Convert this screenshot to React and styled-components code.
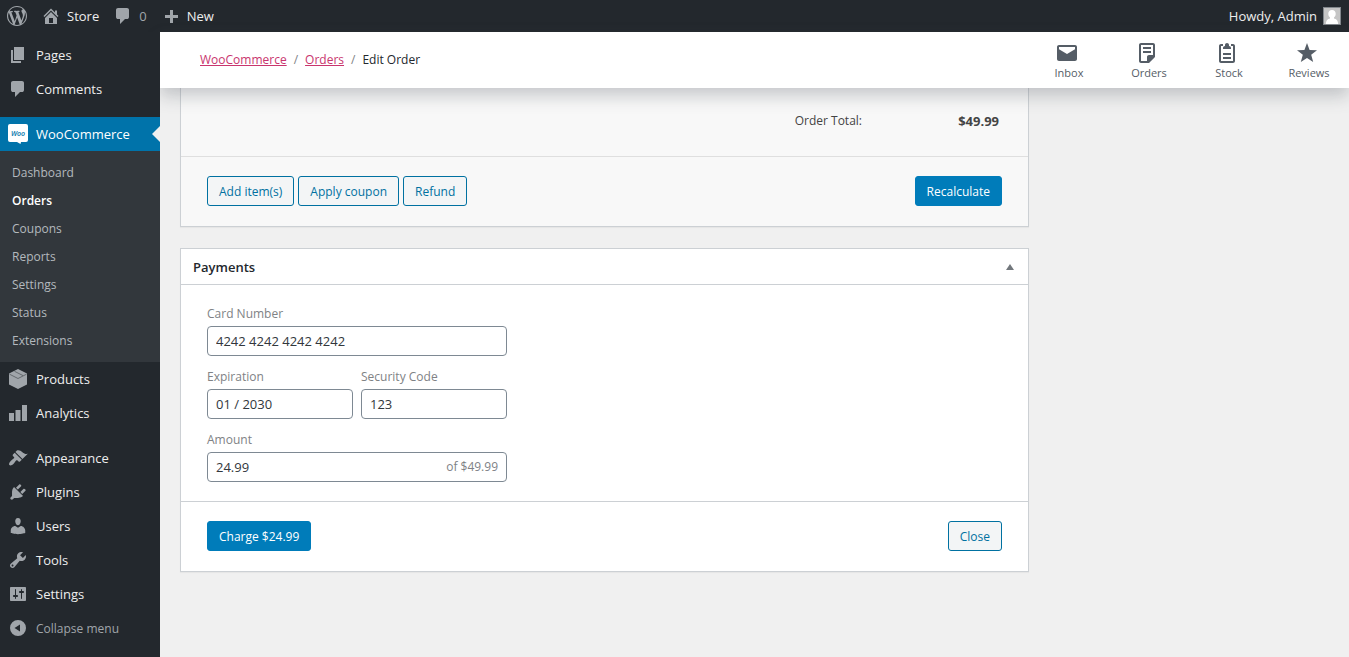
import styled, { createGlobalStyle, ThemeProvider } from 'styled-components';

const theme = {
  colors: {
    base: '#23282d',
    submenu: '#32373c',
    highlight: '#0073aa',
    primary: '#007cba',
    link: '#c9356e',
    border: '#ccd0d4',
    page: '#f0f0f0',
    icon: '#a0a5aa',
    text: '#444',
    muted: '#808285',
  },
  font: '"Segoe UI", "Open Sans", "Noto Sans", sans-serif',
};

const GlobalStyle = createGlobalStyle`
  *, *::before, *::after {
    box-sizing: border-box;
  }

  body {
    margin: 0;
    background: ${({ theme }) => theme.colors.page};
    color: ${({ theme }) => theme.colors.text};
    font-family: ${({ theme }) => theme.font};
    font-size: 12px;
    line-height: 18px;
  }

  button, input {
    font-family: inherit;
  }
`;

const Page = styled.div`
  min-height: 100vh;
  display: flex;
  flex-direction: column;
`;

const AdminBar = styled.header`
  display: flex;
  justify-content: space-between;
  height: 32px;
  padding: 0 8px 0 7px;
  background: ${({ theme }) => theme.colors.base};
`;

const BarGroup = styled.nav`
  display: flex;
  align-items: center;
  gap: 14px;
`;

const BarLink = styled.a`
  display: flex;
  align-items: center;
  gap: 6px;
  color: ${({ $dim }) => ($dim ? '#a0a5aa' : '#eee')};
  font-size: 13px;
  text-decoration: none;
`;

const Icon = styled.svg`
  flex: none;
  width: ${({ $size = 20 }) => $size}px;
  height: ${({ $size = 20 }) => $size}px;
  fill: ${({ theme, $color }) => $color || theme.colors.icon};
`;

const Body = styled.div`
  flex: 1;
  display: flex;
`;

const Sidebar = styled.nav`
  position: relative;
  z-index: 2;
  flex: none;
  width: 160px;
  padding: 6px 0 12px;
  background: ${({ theme }) => theme.colors.base};
`;

const MenuList = styled.ul`
  list-style: none;
  margin: 0 0 11px;
  padding: 0;

  &:last-child {
    margin-bottom: 0;
  }
`;

const MenuLink = styled.a`
  position: relative;
  display: flex;
  align-items: center;
  gap: 8px;
  width: 100%;
  height: 34px;
  padding: 0 8px;
  border: 0;
  background: ${({ theme, $current }) => ($current ? theme.colors.highlight : 'none')};
  color: ${({ $current, $dim }) => ($current ? '#fff' : $dim ? '#a0a5aa' : '#eee')};
  font-size: ${({ $dim }) => ($dim ? 12 : 13)}px;
  text-decoration: none;

  &::after {
    content: '';
    display: ${({ $current }) => ($current ? 'block' : 'none')};
    position: absolute;
    right: 0;
    top: 9px;
    border: 8px solid transparent;
    border-left: 0;
    border-right-color: ${({ theme }) => theme.colors.page};
  }
`;

const Submenu = styled.ul`
  list-style: none;
  margin: 0;
  padding: 8px 0 7px;
  background: ${({ theme }) => theme.colors.submenu};
`;

const SubmenuLink = styled.a`
  display: block;
  padding: 5px 12px;
  color: ${({ $current }) => ($current ? '#fff' : '#b4b9be')};
  font-weight: ${({ $current }) => ($current ? 600 : 400)};
  text-decoration: none;
`;

const Content = styled.div`
  flex: 1;
  min-width: 0;
`;

const PageHeader = styled.div`
  position: relative;
  z-index: 1;
  display: flex;
  justify-content: space-between;
  height: 56px;
  padding-left: 40px;
  background: #fff;
  box-shadow: 0 8px 16px 0 rgba(85, 93, 102, 0.3);
`;

const Breadcrumbs = styled.nav`
  display: flex;
  align-items: center;
  gap: 7px;
  color: #23282d;

  a {
    color: ${({ theme }) => theme.colors.link};
  }
`;

const Separator = styled.span`
  color: ${({ theme }) => theme.colors.muted};
`;

const Activity = styled.div`
  display: flex;
`;

const ActivityTab = styled.button`
  display: flex;
  flex-direction: column;
  align-items: center;
  width: 80px;
  padding: 9px 0 0;
  border: 0;
  background: none;
  color: #555d66;
  font-size: 11px;
  line-height: 16px;

  svg {
    margin-right: 4px;
  }
`;

const Main = styled.main`
  display: grid;
  gap: 21px;
  padding: 0 320px 20px 20px;
`;

const Card = styled.section`
  border: 1px solid ${({ theme }) => theme.colors.border};
  border-top-width: ${({ $cut }) => ($cut ? 0 : '1px')};
  background: ${({ $cut }) => ($cut ? '#f8f8f8' : '#fff')};
  box-shadow: 0 1px 1px rgba(0, 0, 0, 0.04);
`;

const Totals = styled.dl`
  display: flex;
  justify-content: flex-end;
  margin: 0;
  padding: 24px 29px 26px;

  dd {
    width: 137px;
    margin: 0;
    text-align: right;
    font-size: 13px;
    font-weight: 700;
  }
`;

const CardHeader = styled.div`
  display: flex;
  align-items: center;
  justify-content: space-between;
  height: 36px;
  padding: 0 12px;
  border-bottom: 1px solid ${({ theme }) => theme.colors.border};
`;

const CardTitle = styled.h2`
  margin: 0;
  color: #23282d;
  font-size: 13px;
  font-weight: 600;
`;

const Toggle = styled.button`
  display: flex;
  padding: 0;
  border: 0;
  background: none;
`;

const Actions = styled.div`
  display: flex;
  justify-content: space-between;
  padding: 19px 26px 20px;
  border-top: 1px solid ${({ $light }) => ($light ? '#dfdfdf' : '#ccd0d4')};
`;

const ButtonGroup = styled.div`
  display: flex;
  gap: 4px;
`;

const Button = styled.button`
  height: 30px;
  padding: 0 11px;
  border: 1px solid ${({ theme, $primary }) => ($primary ? theme.colors.primary : '#0071a1')};
  border-radius: 3px;
  background: ${({ theme, $primary }) => ($primary ? theme.colors.primary : '#f3f5f6')};
  color: ${({ $primary }) => ($primary ? '#fff' : '#0071a1')};
  font-size: 12px;
  font-weight: ${({ $primary }) => ($primary ? 500 : 400)};
  cursor: pointer;
`;

const Form = styled.form`
  display: grid;
  grid-template-columns: repeat(2, minmax(0, 1fr));
  gap: 12px 8px;
  width: 352px;
  max-width: 100%;
  padding: 20px 26px 19px;
`;

const Field = styled.label`
  display: flex;
  flex-direction: column;
  gap: 3px;
  grid-column: ${({ $wide }) => ($wide ? '1 / -1' : 'auto')};
  color: ${({ theme }) => theme.colors.muted};
`;

const InputBox = styled.span`
  display: flex;
  align-items: center;
  height: 30px;
  padding: 0 8px;
  border: 1px solid #7e8993;
  border-radius: 4px;
  background: #fff;
`;

const Input = styled.input`
  flex: 1;
  min-width: 0;
  padding: 0;
  border: 0;
  outline: 0;
  background: none;
  color: #32373c;
  font-size: 13px;
`;

const WORDPRESS =
  'M20 10c0-5.51-4.49-10-10-10C4.48 0 0 4.49 0 10c0 5.52 4.48 10 10 10 5.51 0 10-4.48 10-10zM7.78 15.37L4.37 6.22c.55-.02 1.17-.08 1.17-.08.5-.06.44-1.13-.06-1.11 0 0-1.45.11-2.37.11-.18 0-.37 0-.58-.01C4.12 2.69 6.87 1.11 10 1.11c2.33 0 4.45.87 6.05 2.34-.68-.11-1.65.39-1.65 1.58 0 .74.45 1.36.9 2.1.35.61.55 1.36.55 2.46 0 1.49-1.4 5-1.4 5l-3.03-8.37c.54-.02.82-.17.82-.17.5-.05.44-1.25-.06-1.22 0 0-1.44.12-2.38.12-.87 0-2.33-.12-2.33-.12-.5-.03-.56 1.2-.06 1.22l.92.08 1.26 3.41zM17.41 10c.24-.64.74-1.87.43-4.25.7 1.29 1.05 2.71 1.05 4.25 0 3.29-1.73 6.24-4.4 7.78.97-2.59 1.94-5.2 2.92-7.78zM6.1 18.09C3.12 16.65 1.11 13.53 1.11 10c0-1.3.23-2.48.72-3.59C3.25 10.3 4.67 14.2 6.1 18.09zm4.03-6.63l2.58 6.98c-.86.29-1.76.45-2.71.45-.79 0-1.57-.11-2.29-.33.81-2.38 1.62-4.74 2.42-7.1z';
const HOME =
  'M16 8.5l1.53 1.53-1.06 1.06L10 4.6l-6.47 6.49-1.06-1.06L10 2.5l4 4v-2h2v4zm-6-2.46l6 5.99V18H4v-5.97zM12 17v-5H8v5h4z';
const COMMENT =
  'M5 2h9q.82 0 1.41.59T16 4v7q0 .82-.59 1.41T14 13h-2l-5 5v-5H5q-.82 0-1.41-.59T3 11V4q0-.82.59-1.41T5 2z';
const PLUS = 'M17 9v3h-5v5H9v-5H4V9h5V4h3v5h5z';
const PAGES = 'M6 15V2h10v13H6zm-1 1h8v2H3V5h2v11z';
const CHART = 'M19 18V2h-5v16h5zm-6.500 0V7h-5v11h5zM6 18v-8H1v8h5z';
const APPEARANCE =
  'M14.48 11.06L7.41 3.99l1.5-1.5c.5-.56 2.3-.47 3.51.32 1.21.8 1.43 1.28 2.91 2.1 1.18.64 2.45 1.26 4.45.85zm-.71.71L6.7 4.7 4.93 6.47c-.39.39-.39 1.02 0 1.41l1.06 1.06c.39.39.39 1.03 0 1.42-.6.6-1.43 1.11-2.21 1.69-.35.26-.7.53-1.01.84C1.43 14.23.4 16.08 1.4 17.07c.99 1 2.84-.03 4.18-1.36.31-.31.58-.66.85-1.02.57-.78 1.08-1.61 1.69-2.21.39-.39 1.02-.39 1.41 0l1.06 1.06c.39.39 1.02.39 1.41 0z';
const PLUGINS =
  'M13.11 4.36L9.87 7.6 8 5.73l3.24-3.24c.35-.34 1.05-.2 1.56.32.52.51.66 1.21.31 1.55zm-8 1.77l.91-1.12 9.01 9.01-1.19.84c-.71.71-2.63 1.16-3.82 1.16H6.14L4.9 17.26c-.59.59-1.54.59-2.12 0-.59-.58-.59-1.53 0-2.12l1.24-1.24v-3.88c0-1.13.4-3.19 1.09-3.89zm7.26 3.97l3.24-3.24c.34-.35 1.04-.21 1.55.31.52.51.66 1.21.31 1.55l-3.24 3.25z';
const USERS =
  'M10 9.25c-2.27 0-2.73-3.44-2.73-3.44C7 4.02 7.82 2 9.97 2c2.16 0 2.98 2.02 2.71 3.81 0 0-.41 3.44-2.68 3.44zm0 2.57L12.72 10c2.39 0 4.52 2.33 4.52 4.53v2.49s-3.65 1.13-7.24 1.13c-3.65 0-7.24-1.13-7.24-1.13v-2.49c0-2.25 1.94-4.48 4.47-4.48z';
const TOOLS =
  'M16.68 9.77c-1.34 1.34-3.3 1.67-4.95.99l-5.41 6.52c-.99.99-2.59.99-3.58 0s-.99-2.59 0-3.57l6.52-5.42c-.68-1.65-.35-3.61.99-4.95 1.28-1.28 3.12-1.62 4.72-1.06l-2.89 2.89 2.82 2.82 2.86-2.87c.53 1.58.18 3.39-1.08 4.65zM3.81 16.21c.4.39 1.04.39 1.43 0 .4-.4.4-1.04 0-1.43-.39-.4-1.03-.4-1.43 0-.39.39-.39 1.03 0 1.43z';
const SETTINGS =
  'M18 16V4c0-.55-.45-1-1-1H3c-.55 0-1 .45-1 1v12c0 .55.45 1 1 1h14c.55 0 1-.45 1-1zM8 11h1c.55 0 1 .45 1 1s-.45 1-1 1H8v1.5c0 .28-.22.5-.5.5s-.5-.22-.5-.5V13H6c-.55 0-1-.45-1-1s.45-1 1-1h1V5.5c0-.28.22-.5.5-.5s.5.22.5.5V11zm5-2h-1c-.55 0-1-.45-1-1s.45-1 1-1h1V5.5c0-.28.22-.5.5-.5s.5.22.5.5V7h1c.55 0 1 .45 1 1s-.45 1-1 1h-1v5.5c0 .28-.22.5-.5.5s-.5-.22-.5-.5V9z';
const COLLAPSE = 'M10 2a8 8 0 1 0 0 16 8 8 0 0 0 0-16zm2 4.5v7L6.5 10z';

const activity = [
  {
    label: 'Inbox',
    path: 'M20 4H4c-1.1 0-2 .9-2 2v12c0 1.1.9 2 2 2h16c1.1 0 2-.9 2-2V6c0-1.1-.9-2-2-2zm0 4.236l-8 4.882-8-4.882V6h16v2.236z',
  },
  {
    label: 'Orders',
    path: 'M16 8H8V6h8v2zm0 2H8v2h8v-2zm4-6v12l-6 6H6c-1.1 0-2-.9-2-2V4c0-1.1.9-2 2-2h12c1.1 0 2 .9 2 2zm-2 10V4H6v16h6v-4c0-1.1.9-2 2-2h4z',
  },
  {
    label: 'Stock',
    path: 'M16 18H8v-2h8v2zm0-6H8v2h8v-2zm2-9h-2v2h2v15H6V5h2V3H6c-1.105 0-2 .895-2 2v15c0 1.105.895 2 2 2h12c1.105 0 2-.895 2-2V5c0-1.105-.895-2-2-2zm-4 2V4c0-1.105-.895-2-2-2s-2 .895-2 2v1c-1.105 0-2 .895-2 2v1h8V7c0-1.105-.895-2-2-2z',
  },
  {
    label: 'Reviews',
    path: 'M12 2l2.582 6.953L22 9.257l-5.822 4.602L18.18 21 12 16.89 5.82 21l2.002-7.14L2 9.256l7.418-.304',
  },
];

const submenu = ['Dashboard', 'Orders', 'Coupons', 'Reports', 'Settings', 'Status', 'Extensions'];

const Dashicon = ({ path }) => (
  <Icon viewBox="0 0 20 20" aria-hidden="true">
    <path fillRule="evenodd" d={path} />
  </Icon>
);

const WooIcon = () => (
  <Icon viewBox="0 0 20 20" $color="#fff" aria-hidden="true">
    <path d="M2 0h16a2 2 0 0 1 2 2v14a2 2 0 0 1-2 2h-5l-.5 2-3.5-2H2a2 2 0 0 1-2-2V2a2 2 0 0 1 2-2z" />
    <text x="10" y="12" textAnchor="middle" fontSize="7" fontWeight="600" fontStyle="italic" fill="#0073aa">
      Woo
    </text>
  </Icon>
);

const ProductsIcon = () => (
  <Icon viewBox="0 0 20 20" aria-hidden="true">
    <path d="M10 0l9 4.5v11L10 20l-9-4.5v-11z" />
    <path d="M1.5 5.2L10 9.5l8.5-4.3M6.5 2.3L15 6.6" fill="none" stroke="#4b5055" strokeWidth="0.7" />
  </Icon>
);

const Avatar = () => (
  <Icon viewBox="0 0 18 18" $size={18} $color="#fff" role="img" aria-label="Admin avatar">
    <rect width="18" height="18" fill="#82878c" />
    <rect x="1" y="1" width="16" height="16" fill="#c5c5c5" />
    <path d="M9 3c2.3 0 3.7 1.6 3.7 3.8 0 1.6-.7 2.9-1.7 3.6v1.1c2.2.5 4 1.8 4.2 5.5H2.8c.2-3.700 2-5 4.2-5.500v-1.100C6 9.700 5.300 8.400 5.300 6.800 5.300 4.600 6.700 3 9 3z" />
  </Icon>
);

function MenuItem({ label, icon, current, children }) {
  return (
    <li>
      <MenuLink href="#" $current={current}>
        {icon}
        {label}
      </MenuLink>
      {children}
    </li>
  );
}

function AdminMenu() {
  return (
    <Sidebar aria-label="Main menu">
      <MenuList>
        <MenuItem label="Pages" icon={<Dashicon path={PAGES} />} />
        <MenuItem label="Comments" icon={<Dashicon path={COMMENT} />} />
      </MenuList>
      <MenuList>
        <MenuItem label="WooCommerce" icon={<WooIcon />} current>
          <Submenu>
            {submenu.map((label) => (
              <li key={label}>
                <SubmenuLink href="#" $current={label === 'Orders'}>
                  {label}
                </SubmenuLink>
              </li>
            ))}
          </Submenu>
        </MenuItem>
        <MenuItem label="Products" icon={<ProductsIcon />} />
        <MenuItem label="Analytics" icon={<Dashicon path={CHART} />} />
      </MenuList>
      <MenuList>
        <MenuItem label="Appearance" icon={<Dashicon path={APPEARANCE} />} />
        <MenuItem label="Plugins" icon={<Dashicon path={PLUGINS} />} />
        <MenuItem label="Users" icon={<Dashicon path={USERS} />} />
        <MenuItem label="Tools" icon={<Dashicon path={TOOLS} />} />
        <MenuItem label="Settings" icon={<Dashicon path={SETTINGS} />} />
        <li>
          <MenuLink as="button" type="button" $dim>
            <Dashicon path={COLLAPSE} />
            Collapse menu
          </MenuLink>
        </li>
      </MenuList>
    </Sidebar>
  );
}

function Payments() {
  return (
    <Card>
      <CardHeader>
        <CardTitle>Payments</CardTitle>
        <Toggle type="button" aria-label="Toggle panel: Payments">
          <Icon viewBox="0 0 12 12" $size={12} $color="#72777c">
            <path d="M6 3l4 6H2z" />
          </Icon>
        </Toggle>
      </CardHeader>
      <Form id="payment">
        <Field $wide>
          Card Number
          <InputBox>
            <Input defaultValue="4242 4242 4242 4242" />
          </InputBox>
        </Field>
        <Field>
          Expiration
          <InputBox>
            <Input defaultValue="01 / 2030" />
          </InputBox>
        </Field>
        <Field>
          Security Code
          <InputBox>
            <Input defaultValue="123" />
          </InputBox>
        </Field>
        <Field $wide>
          Amount
          <InputBox>
            <Input defaultValue="24.99" />
            of $49.99
          </InputBox>
        </Field>
      </Form>
      <Actions>
        <Button type="button" $primary>Charge $24.99</Button>
        <Button type="button">Close</Button>
      </Actions>
    </Card>
  );
}

export default function App() {
  return (
    <ThemeProvider theme={theme}>
      <GlobalStyle />
      <Page>
        <AdminBar>
          <BarGroup>
            <BarLink href="#" aria-label="About WordPress">
              <Dashicon path={WORDPRESS} />
            </BarLink>
            <BarLink href="#">
              <Dashicon path={HOME} />
              Store
            </BarLink>
            <BarLink href="#" $dim>
              <Dashicon path={COMMENT} />
              0
            </BarLink>
            <BarLink href="#">
              <Dashicon path={PLUS} />
              New
            </BarLink>
          </BarGroup>
          <BarGroup>
            <BarLink href="#">
              Howdy, Admin
              <Avatar />
            </BarLink>
          </BarGroup>
        </AdminBar>
        <Body>
          <AdminMenu />
          <Content>
            <PageHeader>
              <Breadcrumbs aria-label="Breadcrumb">
                <a href="#">WooCommerce</a>
                <Separator>/</Separator>
                <a href="#">Orders</a>
                <Separator>/</Separator>
                <span>Edit Order</span>
              </Breadcrumbs>
              <Activity>
                {activity.map(({ label, path }) => (
                  <ActivityTab type="button" key={label}>
                    <Icon viewBox="0 0 24 24" $size={24} $color="#555d66">
                      <path d={path} />
                    </Icon>
                    {label}
                  </ActivityTab>
                ))}
              </Activity>
            </PageHeader>
            <Main>
              <Card $cut>
                <Totals>
                  <dt>Order Total:</dt>
                  <dd>$49.99</dd>
                </Totals>
                <Actions $light>
                  <ButtonGroup>
                    <Button type="button">Add item(s)</Button>
                    <Button type="button">Apply coupon</Button>
                    <Button type="button">Refund</Button>
                  </ButtonGroup>
                  <Button type="button" $primary>Recalculate</Button>
                </Actions>
              </Card>
              <Payments />
            </Main>
          </Content>
        </Body>
      </Page>
    </ThemeProvider>
  );
}
